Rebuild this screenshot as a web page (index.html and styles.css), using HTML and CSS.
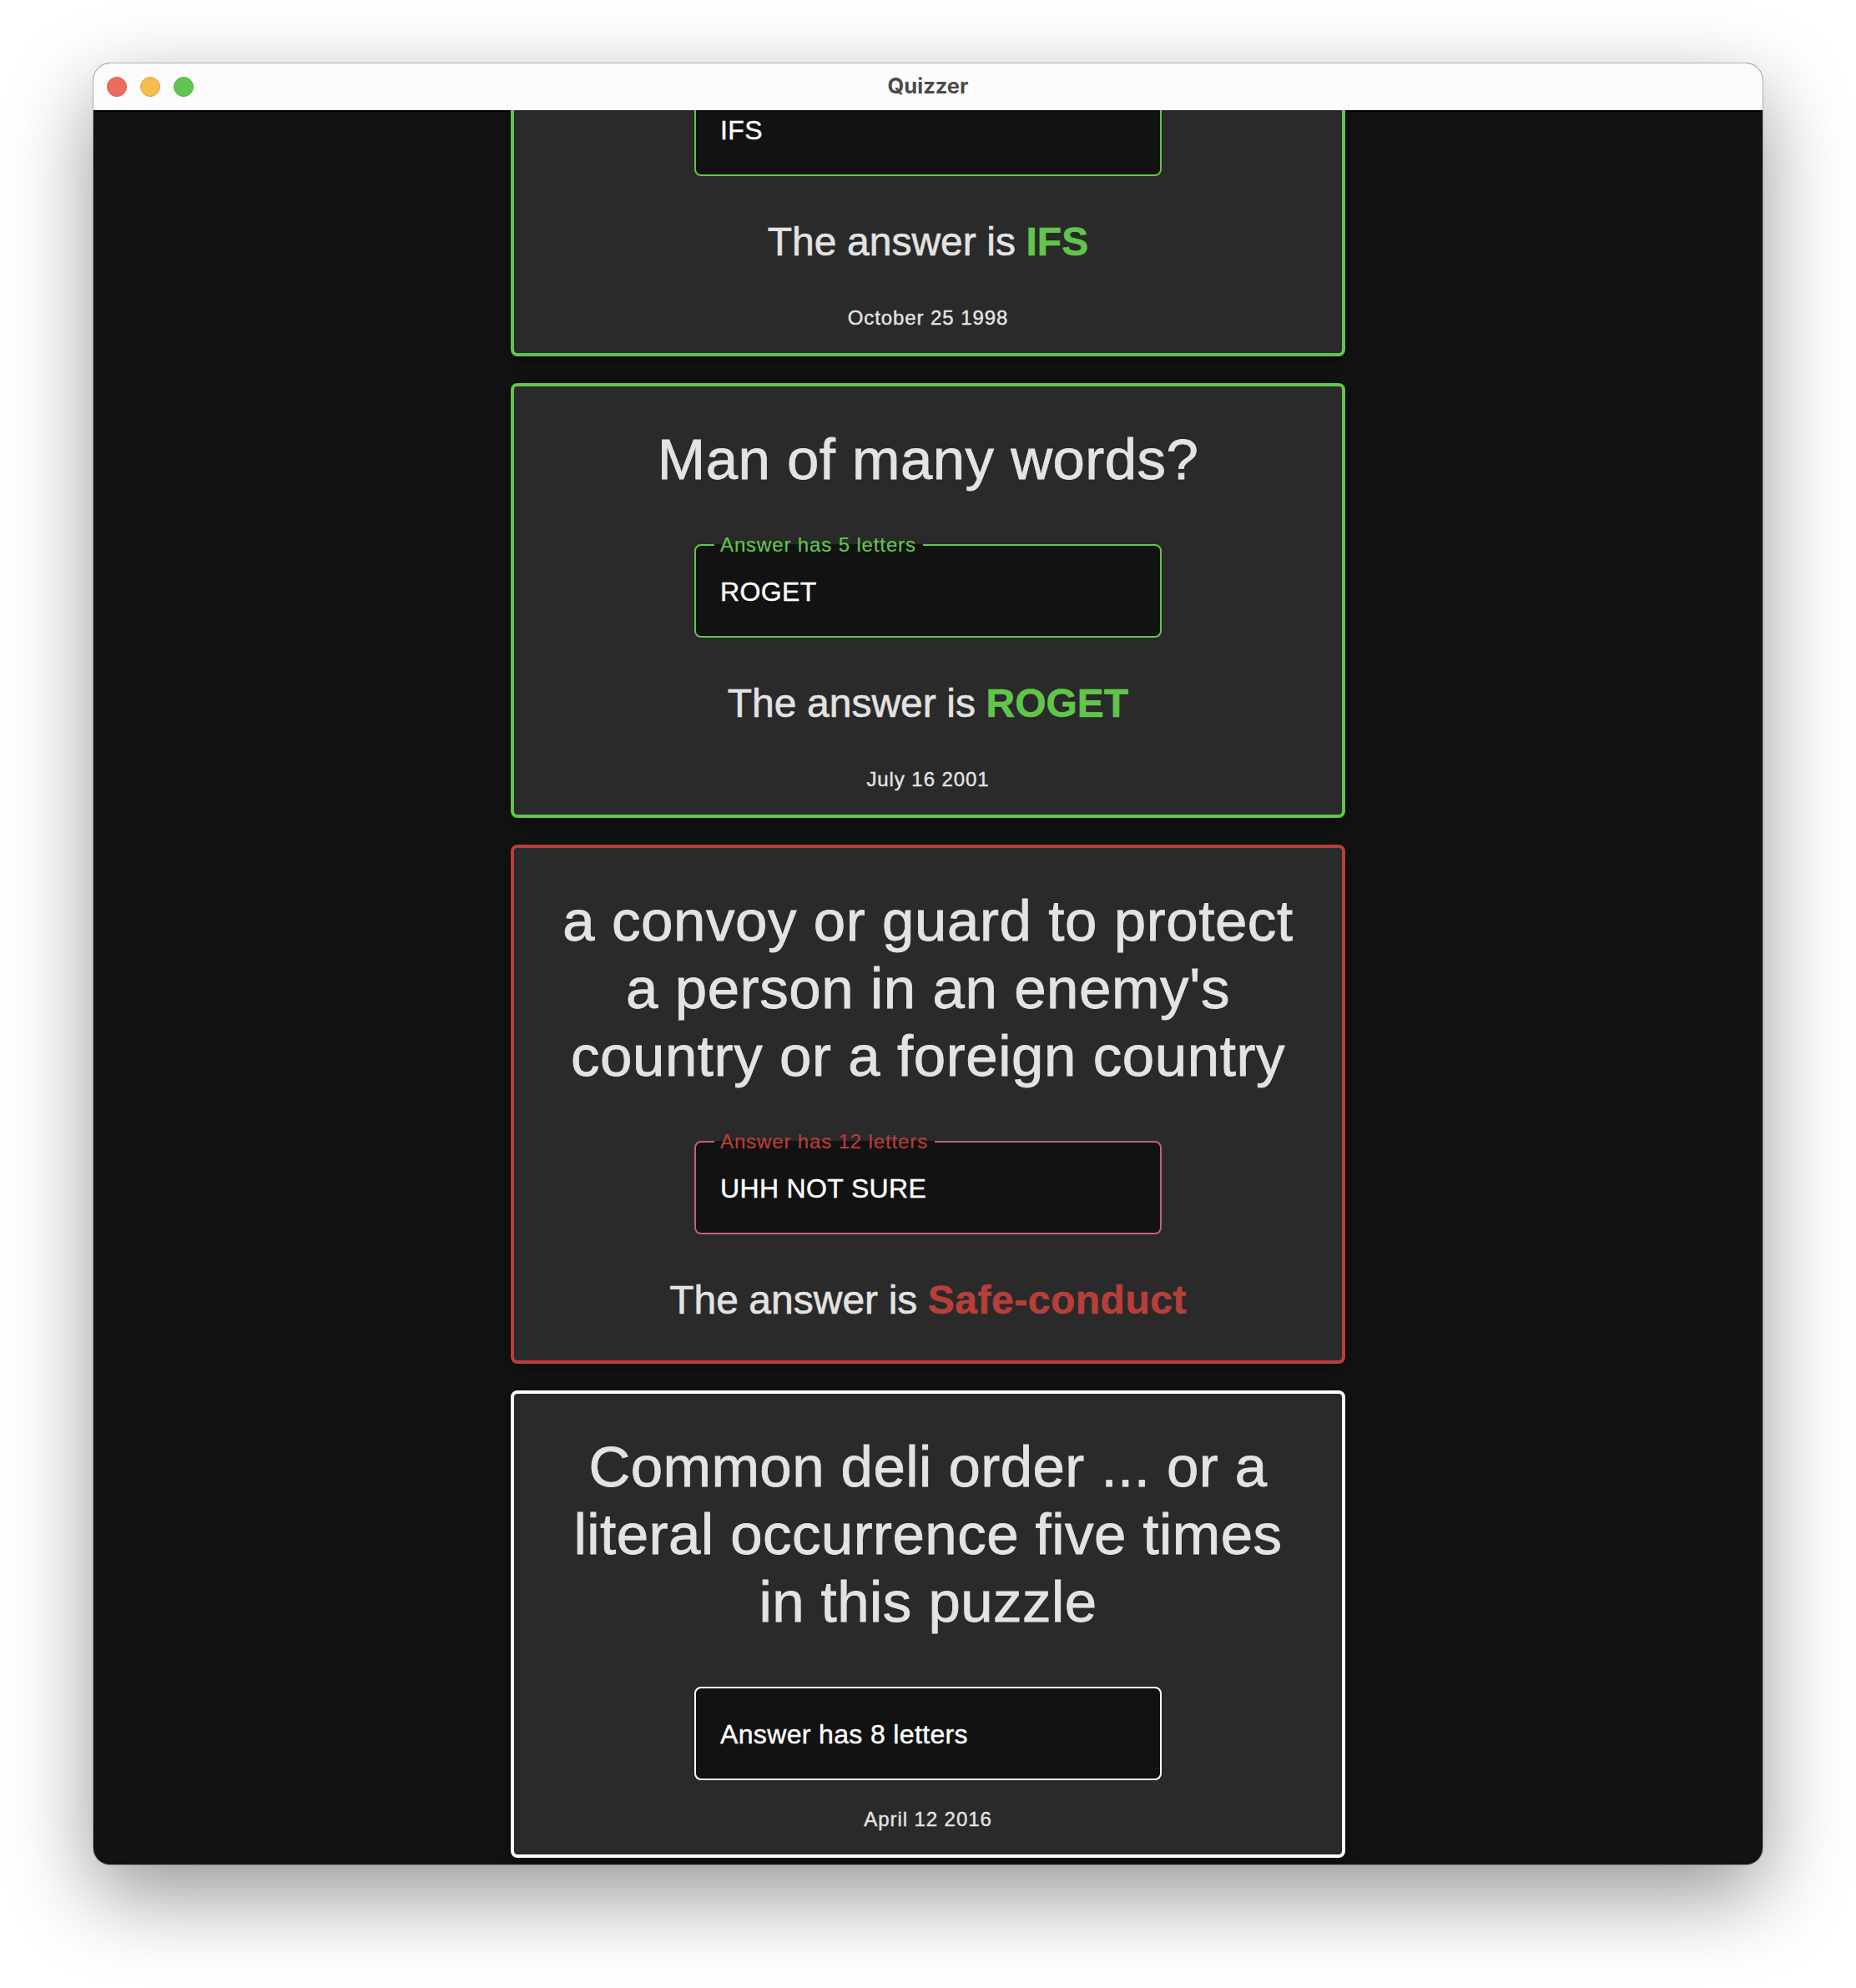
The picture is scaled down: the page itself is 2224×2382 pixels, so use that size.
FILE: index.html
```html
<!DOCTYPE html>
<html lang="en">
<head>
<meta charset="utf-8">
<title>Quizzer</title>
<link rel="stylesheet" href="styles.css">
</head>
<body>
<div class="window">
  <header class="titlebar">
    <div class="lights">
      <span class="light close"></span>
      <span class="light minimize"></span>
      <span class="light maximize"></span>
    </div>
    <h1 class="title">Quizzer</h1>
  </header>
  <main class="feed">
    <section class="card correct">
      <div class="field">IFS</div>
      <p class="answer">The answer is <strong>IFS</strong></p>
      <p class="date">October 25 1998</p>
    </section>
    <section class="card correct">
      <h2 class="question">Man of many words?</h2>
      <div class="field"><span class="label">Answer has 5 letters</span>ROGET</div>
      <p class="answer">The answer is <strong>ROGET</strong></p>
      <p class="date">July 16 2001</p>
    </section>
    <section class="card wrong">
      <h2 class="question">a convoy or guard to protect<br>a person in an enemy's<br>country or a foreign country</h2>
      <div class="field"><span class="label">Answer has 12 letters</span>UHH NOT SURE</div>
      <p class="answer">The answer is <strong>Safe-conduct</strong></p>
    </section>
    <section class="card open">
      <h2 class="question">Common deli order ... or a<br>literal occurrence five times<br>in this puzzle</h2>
      <div class="field">Answer has 8 letters</div>
      <p class="date">April 12 2016</p>
    </section>
  </main>
</div>
</body>
</html>
```
FILE: styles.css
```css
* { box-sizing: border-box; }

body {
  margin: 0;
  padding: 76px 112px 0;
  height: 2382px;
  overflow: hidden;
  background: #fff;
  font-family: "Liberation Sans", Arial, sans-serif;
}

h1, h2, p { margin: 0; font-weight: 400; }

.window {
  display: flex;
  flex-direction: column;
  height: 2158px;
  border-radius: 20px;
  background: #121212;
  box-shadow: 0 0 0 1px rgba(0, 0, 0, .24), 0 36px 100px rgba(0, 0, 0, .42);
}

.titlebar {
  display: grid;
  grid-template-columns: 1fr auto 1fr;
  align-items: center;
  height: 56px;
  padding: 0 16px;
  border-radius: 20px 20px 0 0;
  background: #fcfcfc;
}

.lights { display: flex; gap: 16px; }

.light {
  width: 24px;
  height: 24px;
  border: 1px solid;
  border-radius: 50%;
}
.close { background: #ec6a5e; border-color: #d9594f; }
.minimize { background: #f4bf4f; border-color: #dba63b; }
.maximize { background: #61c554; border-color: #50b040; }

.title {
  padding-bottom: 2px;
  font: 700 25.5px/32px Inter, sans-serif;
  color: #4a4a4a;
}

.feed {
  flex: 1;
  min-height: 0;
  display: flex;
  flex-direction: column;
  justify-content: flex-end;
  align-items: center;
  gap: 32px;
  padding-bottom: 8px;
  overflow: hidden;
  border-radius: 0 0 20px 20px;
  box-shadow: inset 0 2px #000;
}

.card {
  --accent: #fff;
  --outline: var(--accent);
  flex: none;
  display: flex;
  flex-direction: column;
  align-items: center;
  width: 1000px;
  padding: 47px 20px 45px;
  border: 4px solid var(--accent);
  border-radius: 8px;
  background: #2a2a2a;
  box-shadow: 0 4px 16px rgba(0, 0, 0, .4);
  color: #e3e3e3;
  text-align: center;
  -webkit-text-stroke: .4px currentColor;
}
.card:has(.date) { padding-bottom: 28px; }
.correct { --accent: #62c54b; }
.wrong { --accent: #b83f39; --outline: #bf6373; }

.question {
  margin-bottom: 61px;
  font-size: 69px;
  line-height: 81px;
  letter-spacing: .45px;
  -webkit-text-stroke-width: .8px;
}
.wrong .question { letter-spacing: .58px; }

.field {
  position: relative;
  width: 560px;
  height: 112px;
  padding: 1px 28px 0 29px;
  border: 2px solid var(--outline);
  border-radius: 8px;
  background: #121212;
  color: #fff;
  font-size: 32px;
  line-height: 108px;
  letter-spacing: .35px;
  text-align: left;
}

/* Floating label: the stripe opens the outline behind the text. */
.label {
  position: absolute;
  top: -16px;
  left: 22px;
  height: 30px;
  padding: 0 8px 0 7px;
  background: linear-gradient(#121212, #121212) no-repeat center / 100% 2px;
  color: var(--accent);
  font-size: 24px;
  line-height: 30px;
  letter-spacing: .87px;
  -webkit-text-stroke-width: .2px;
}

.answer {
  margin-top: 51px;
  margin-bottom: -1px;
  font-size: 48px;
  line-height: 56px;
  word-spacing: -.8px;
  -webkit-text-stroke-width: .6px;
}
.answer strong { color: var(--accent); font-weight: 700; }
.wrong strong { letter-spacing: .5px; }

.date {
  margin-top: 33px;
  font-size: 24px;
  line-height: 28px;
  letter-spacing: .92px;
}
.answer + .date { margin-top: 50px; }
```
